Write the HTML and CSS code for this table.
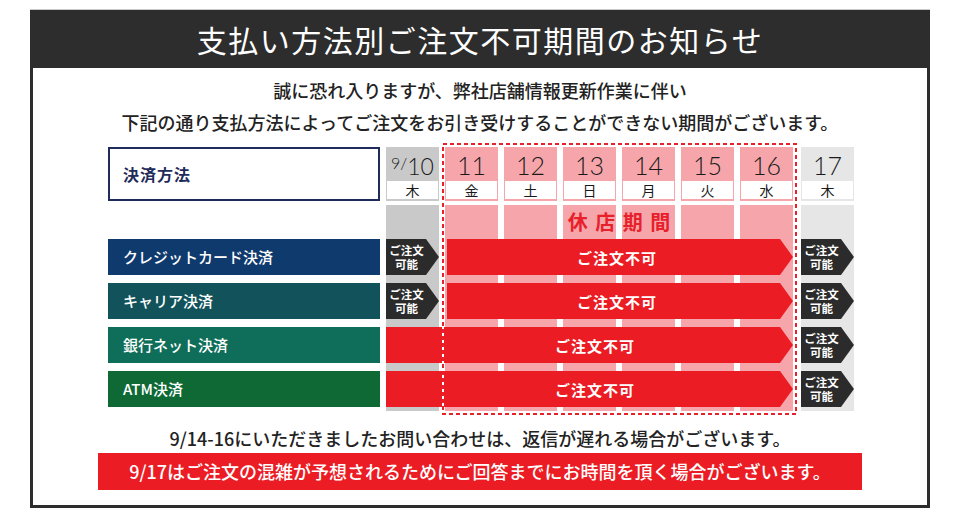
FILE: index.html
```html
<!DOCTYPE html>
<html lang="ja">
<head>
<meta charset="utf-8">
<title>支払い方法別ご注文不可期間のお知らせ</title>
<link rel="stylesheet" href="styles.css">
</head>
<body>
<div class="frame">
  <header class="head"><h1>支払い方法別ご注文不可期間のお知らせ</h1></header>
  <main class="body">
    <p class="intro">誠に恐れ入りますが、弊社店舗情報更新作業に伴い<br>下記の通り支払方法によってご注文をお引き受けすることができない期間がございます。</p>
    <div class="schedule">
      <div class="method-head">決済方法</div>

      <div class="day gray c2"><div class="num"><span class="sup">9/</span><span class="small">10</span></div><div class="wd">木</div></div>
      <div class="day pink c3"><div class="num">11</div><div class="wd">金</div></div>
      <div class="day pink c4"><div class="num">12</div><div class="wd">土</div></div>
      <div class="day pink c5"><div class="num">13</div><div class="wd">日</div></div>
      <div class="day pink c6"><div class="num">14</div><div class="wd">月</div></div>
      <div class="day pink c7"><div class="num">15</div><div class="wd">火</div></div>
      <div class="day pink c8"><div class="num">16</div><div class="wd">水</div></div>
      <div class="day light c9"><div class="num">17</div><div class="wd">木</div></div>

      <div class="col gray c2"></div>
      <div class="col pink c3"></div>
      <div class="col pink c4"></div>
      <div class="col pink c5"></div>
      <div class="col pink c6"></div>
      <div class="col pink c7"></div>
      <div class="col pink c8"></div>
      <div class="col light c9"></div>

      <div class="closed">休店期間</div>

      <div class="method m1 r1">クレジットカード決済</div>
      <div class="ok c2 r1"><p>ご注文<br>可能</p></div>
      <div class="ng short r1">ご注文不可</div>
      <div class="ok c9 r1"><p>ご注文<br>可能</p></div>

      <div class="method m2 r2">キャリア決済</div>
      <div class="ok c2 r2"><p>ご注文<br>可能</p></div>
      <div class="ng short r2">ご注文不可</div>
      <div class="ok c9 r2"><p>ご注文<br>可能</p></div>

      <div class="method m3 r3">銀行ネット決済</div>
      <div class="ng long r3">ご注文不可</div>
      <div class="ok c9 r3"><p>ご注文<br>可能</p></div>

      <div class="method m4 r4">ATM決済</div>
      <div class="ng long r4">ご注文不可</div>
      <div class="ok c9 r4"><p>ご注文<br>可能</p></div>

      <svg class="period" width="355" height="272" viewBox="0 0 355 272">
        <rect x="1" y="1" width="353" height="270" fill="none" stroke="#ffffff" stroke-width="2"/>
        <rect x="1" y="1" width="353" height="270" fill="none" stroke="#e8202a" stroke-width="2" stroke-dasharray="4 3"/>
      </svg>
    </div>
    <p class="note">9/14-16にいただきましたお問い合わせは、返信が遅れる場合がございます。</p>
    <p class="banner">9/17はご注文の混雑が予想されるためにご回答までにお時間を頂く場合がございます。</p>
  </main>
</div>
</body>
</html>
```

FILE: styles.css
```css
* { box-sizing: border-box; }

body {
  margin: 0;
  background: #fff;
  font-family: "Noto Sans CJK JP", "Noto Sans", sans-serif;
  color: #222;
}

.frame {
  width: 900px;
  margin: 9px 30px 0;
}

.head {
  height: 59px;
  border-top: 1px solid #c9c9c9;
  background: #2d2d2d;
  display: flex;
  align-items: center;
  justify-content: center;
}

.head h1 {
  margin: 0;
  color: #fff;
  font-size: 30px;
  font-weight: 400;
  line-height: 1;
  letter-spacing: 1.5px;
}

.body {
  border: 3px solid #2d2d2d;
  border-top: 0;
  padding: 6px 0 15px;
}

.intro {
  margin: 0;
  text-align: center;
  font-size: 18px;
  line-height: 32px;
  font-weight: 500;
}

.schedule {
  position: relative;
  width: 746px;
  margin: 9px 0 0 75px;
  display: grid;
  grid-template-columns: 272px repeat(7, 53px) 55px;
  grid-template-rows: 54px 4px 34px 36px 8px 36px 8px 36px 8px 36px 4px;
  column-gap: 6px;
}

.method-head {
  grid-column: 1;
  grid-row: 1;
  border: 2px solid #1f2b5a;
  color: #1f2b5a;
  font-size: 16px;
  font-weight: 700;
  letter-spacing: 1px;
  display: flex;
  align-items: center;
  padding-left: 13px;
}

.c2 { grid-column: 2; }
.c3 { grid-column: 3; }
.c4 { grid-column: 4; }
.c5 { grid-column: 5; }
.c6 { grid-column: 6; }
.c7 { grid-column: 7; }
.c8 { grid-column: 8; }
.c9 { grid-column: 9; justify-self: end; width: 53px; }

.gray { background: #c9c9c9; }
.pink { background: #f6a6aa; }
.light { background: #e6e6e6; }

.day {
  grid-row: 1;
  display: flex;
  flex-direction: column;
  padding: 0 1px 2px;
}

.day .num {
  height: 34px;
  padding-top: 2px;
  line-height: 32px;
  text-align: center;
  font-family: "Lato", "Noto Sans", sans-serif;
  font-weight: 300;
  font-size: 25px;
  color: #1a1a1a;
  overflow: hidden;
}

.day .num .sup {
  font-size: 16px;
  vertical-align: 6px;
  line-height: 1;
}

.day .num .small {
  font-size: 23px;
}

.day .wd {
  flex: 1;
  background: #fff;
  text-align: center;
  font-size: 14px;
  line-height: 18px;
  color: #1a1a1a;
}

.col { grid-row: 3 / 12; }

.closed {
  grid-row: 3;
  grid-column: 4 / 8;
  color: #e8202a;
  font-size: 20px;
  font-weight: 700;
  letter-spacing: 7.5px;
  padding-left: 7.5px;
  line-height: 34px;
  text-align: center;
  white-space: nowrap;
}

.r1 { grid-row: 4; }
.r2 { grid-row: 6; }
.r3 { grid-row: 8; }
.r4 { grid-row: 10; }

.method {
  grid-column: 1;
  color: #fff;
  font-size: 15px;
  font-weight: 500;
  line-height: 36px;
  padding-left: 15px;
}

.m1 { background: #0f3a6e; }
.m2 { background: #12535b; }
.m3 { background: #0f6e59; }
.m4 { background: #0e6935; }

.ok {
  background: #2b2b2b;
  color: #fff;
  font-size: 11.5px;
  font-weight: 700;
  line-height: 14px;
  padding-right: 12px;
  display: flex;
  align-items: center;
  justify-content: center;
  text-align: center;
  clip-path: polygon(0 0, calc(100% - 13px) 0, 100% 50%, calc(100% - 13px) 100%, 0 100%);
}

.ok p { margin: 0; }

.ng {
  background: #ec1c24;
  color: #fff;
  font-size: 15px;
  font-weight: 700;
  letter-spacing: 1px;
  display: flex;
  align-items: center;
  justify-content: center;
  padding-right: 6px;
  clip-path: polygon(0 0, calc(100% - 13px) 0, 100% 50%, calc(100% - 13px) 100%, 0 100%);
}

.ng.short { grid-column: 3 / 9; margin-left: 2px; }
.ng.long { grid-column: 2 / 9; padding-left: 17px; }

.period {
  position: absolute;
  left: 334px;
  top: -4px;
  pointer-events: none;
}

.note {
  margin: 13px 0 0;
  text-align: center;
  font-size: 18px;
  line-height: 28px;
  font-weight: 500;
}

.banner {
  width: 764px;
  margin: 1px auto 0;
  background: #ec1c24;
  color: #fff;
  text-align: center;
  font-size: 18px;
  line-height: 37px;
  font-weight: 500;
}
```
